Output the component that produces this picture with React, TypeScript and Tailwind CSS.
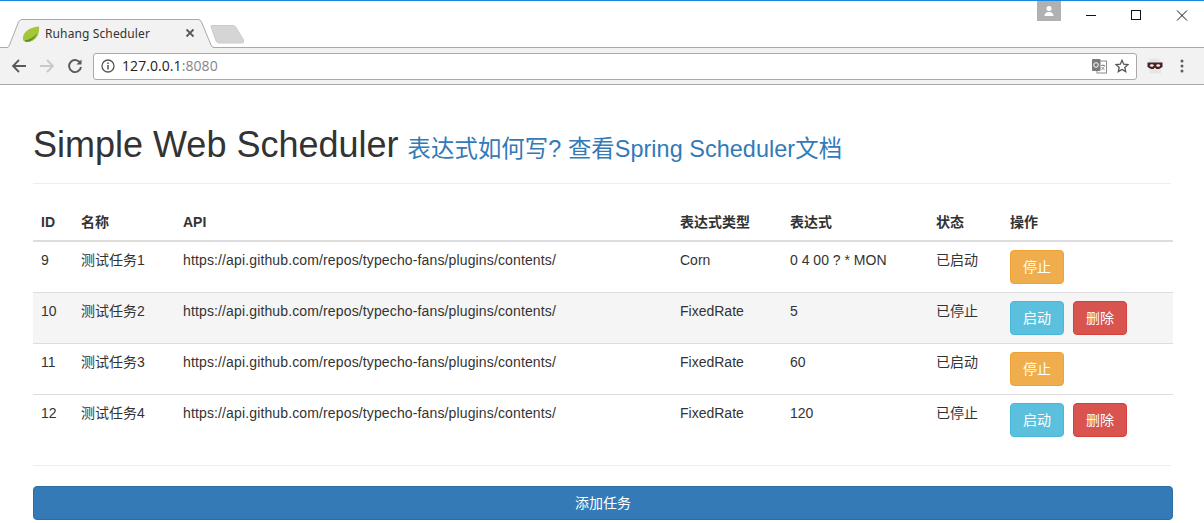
const rows = [
  { id: 9, name: "测试任务1", type: "Corn", expr: "0 4 00 ? * MON", status: "已启动", running: true },
  { id: 10, name: "测试任务2", type: "FixedRate", expr: "5", status: "已停止", running: false },
  { id: 11, name: "测试任务3", type: "FixedRate", expr: "60", status: "已启动", running: true },
  { id: 12, name: "测试任务4", type: "FixedRate", expr: "120", status: "已停止", running: false },
];
const url = "https://api.github.com/repos/typecho-fans/plugins/contents/";
const headers = ["ID", "名称", "API", "表达式类型", "表达式", "状态", "操作"];

function Tab() {
  return (
    <div className="relative z-10 -mt-[1px] h-[47px] w-[250px] shrink-0">
      <svg className="absolute left-0 top-0" width="250" height="50" viewBox="0 0 250 50" fill="none">
        <path d="M7 48.500V47.500Q8.500 47.500 9.500 45L18.500 22Q20 19.500 22 19.500H198Q200.500 19.500 201.500 22L211 45Q212 47.500 214 47.500V48.500Z" fill="#f2f2f2" />
        <path d="M6 47.500H7Q8.500 47.500 9.500 45L18.500 22Q20 19.500 22 19.500H198Q200.500 19.500 201.500 22L211 45Q212 47.500 214 47.500H215" stroke="#a9a9a9" />
        <path d="M211 26.500Q210.500 25.500 212 25.500H233Q235 25.500 236 27.500L243.500 40Q244.500 43 242 43H219Q217 43 216 41Z" fill="#d5d5d5" stroke="#cbcbcb" />
        <path d="M23 40C22 33 28 27.500 39 26.500C40 35 35 42 27.500 42C25.500 42 24 41.500 23 40Z" fill="#a4c737" />
        <path d="M24.500 40.500C29 40 34 37.500 37.500 33C35 39 30 42 26 42Z" fill="#5f8d27" />
        <path d="M186.500 29.500L193.500 36.500M193.500 29.500L186.500 36.500" stroke="#5a5a5a" strokeWidth="1.800" />
      </svg>
      <span className="absolute left-[45px] top-[25px] font-['Noto_Sans',sans-serif] text-[12px] leading-[17px] tracking-[0.12px] text-[#333]">
        Ruhang Scheduler
      </span>
    </div>
  );
}

function WindowControls() {
  return (
    <div className="ml-auto flex h-[46px] items-start">
      <div className="mr-[7px] flex h-[20px] w-[24px] items-center justify-center bg-[#b1b1b1]">
        <svg width="12" height="12" viewBox="0 0 12 12" fill="#fff">
          <circle cx="6" cy="3.500" r="2.500" />
          <path d="M1.500 11C1.500 8 4 7 6 7S10.500 8 10.500 11Z" />
        </svg>
      </div>
      <svg width="136" height="28" viewBox="0 0 136 28" fill="none" stroke="#111" strokeWidth="1">
        <path d="M18 14.500H28" />
        <rect x="63.500" y="9.500" width="9" height="9" />
        <path d="M109 9.500L119 19.500M119 9.500L109 19.500" />
      </svg>
    </div>
  );
}

function Toolbar() {
  return (
    <div className="flex h-[38px] items-center border-y border-t-[#a9a9a9] border-b-[#a8a8a8] bg-[#f2f2f2]">
      <svg className="ml-[11px] shrink-0" width="16" height="16" viewBox="0 0 16 16" fill="none" stroke="#5a5a5a" strokeWidth="1.800">
        <path d="M15 8H2M8 2L2 8L8 14" />
      </svg>
      <svg className="ml-[12px] shrink-0" width="16" height="16" viewBox="0 0 16 16" fill="none" stroke="#c8c8c8" strokeWidth="1.800">
        <path d="M1 8H14M8 2L14 8L8 14" />
      </svg>
      <svg className="ml-[12px] shrink-0" width="16" height="16" viewBox="0 0 16 16" fill="none" stroke="#5a5a5a" strokeWidth="1.900">
        <path d="M13.500 5.500A6 6 0 1 0 14 9" />
        <path d="M14.500 1.500V6.500H9.500" fill="#5a5a5a" stroke="none" />
      </svg>
      <div className="ml-[10px] flex h-[27px] w-[1044px] shrink-0 items-center rounded-[3px] border border-[#a9a9a9] bg-white">
        <svg className="ml-[7px] shrink-0" width="14" height="14" viewBox="0 0 14 14" fill="none" stroke="#555" strokeWidth="1.300">
          <circle cx="7" cy="7" r="6" />
          <path d="M7 6V10.500M7 3.500V5" strokeWidth="1.500" />
        </svg>
        <span className="ml-[7px] font-['Open_Sans',sans-serif] text-[14px] leading-[20px] tracking-[0.07px] text-[#222]">
          127.0.0.1<span className="text-[#80868b]">:8080</span>
        </span>
        <svg className="ml-auto shrink-0" width="15" height="15" viewBox="0 0 15 15">
          <rect x="5" y="2" width="9.500" height="12" fill="#fff" stroke="#8d8d8d" />
          <rect x="0" y="0" width="8.500" height="12" rx="1" fill="#7a7a7a" />
          <circle cx="4" cy="6" r="2.300" fill="none" stroke="#fff" />
          <path d="M9 6.500H13M11 5.500V7M9.500 11L12.500 7.500M9.500 8L12.500 11" stroke="#777" strokeWidth=".8" />
        </svg>
        <svg className="ml-[8px] mr-[7px] shrink-0" width="14" height="14" viewBox="0 0 14 14" fill="none" stroke="#555" strokeWidth="1.300">
          <path d="M7 1.300L8.700 5.200L13 5.600L9.800 8.400L10.700 12.600L7 10.400L3.300 12.600L4.200 8.400L1 5.600L5.300 5.200Z" />
        </svg>
      </div>
      <svg className="ml-[10px] shrink-0" width="16" height="16" viewBox="0 0 16 16">
        <path d="M2.500 0.500H11L14 3.500V15.500H2.500Z" fill="#e6e6e6" />
        <path d="M0.500 4.500H15.500V9L12 11H9.500L8 9.500L6.500 11H4L0.500 9Z" fill="#4b2020" />
        <ellipse cx="4.800" cy="7.500" rx="1.900" ry="1.200" fill="#eee" />
        <ellipse cx="11.200" cy="7.500" rx="1.900" ry="1.200" fill="#eee" />
      </svg>
      <svg className="ml-[17px] shrink-0" width="4" height="14" viewBox="0 0 4 14" fill="#5f5f5f">
        <circle cx="2" cy="2" r="1.500" />
        <circle cx="2" cy="7" r="1.500" />
        <circle cx="2" cy="12" r="1.500" />
      </svg>
    </div>
  );
}

function Btn({ label, cls }: { label: string; cls: string }) {
  return (
    <button className={`h-[34px] w-[54px] rounded-[4px] border text-[14px] leading-[20px] text-white ${cls}`}>
      {label}
    </button>
  );
}

export default function App() {
  return (
    <div className="h-[523px] w-[1204px] overflow-hidden bg-white font-['Liberation_Sans','Noto_Sans_CJK_SC',sans-serif] text-[14px] leading-[20px] text-[#333]">
      <div className="h-[1px] bg-[#1a87dc]" />
      <div className="flex h-[46px] items-start bg-white">
        <Tab />
        <WindowControls />
      </div>
      <Toolbar />
      <div className="px-[33px]">
        <div className="mt-[40px] border-b border-[#eeeeee] pb-[14px]">
          <h1 className="text-[36px] leading-[40px] font-normal">
            Simple Web Scheduler{" "}
            <a className="-ml-[1px] text-[23.400px] tracking-[0.06px] text-[#337ab7]">表达式如何写? 查看Spring Scheduler文档</a>
          </h1>
        </div>
        <table className="mt-[20px] w-[1140px] table-fixed border-collapse">
          <colgroup>
            <col className="w-[40px]" />
            <col className="w-[102px]" />
            <col className="w-[497px]" />
            <col className="w-[110px]" />
            <col className="w-[146px]" />
            <col className="w-[74px]" />
            <col className="w-[171px]" />
          </colgroup>
          <thead>
            <tr className="border-b-2 border-[#dddddd]">
              {headers.map((h) => (
                <th key={h} className="p-[8px] text-left font-bold">{h}</th>
              ))}
            </tr>
          </thead>
          <tbody>
            {rows.map((r, i) => (
              <tr key={r.id} className={`${i > 0 ? "border-t border-[#dddddd]" : ""} ${i === 1 ? "bg-[#f5f5f5]" : ""} h-[51px]`}>
                <td className="p-[8px] align-top">{r.id}</td>
                <td className="p-[8px] align-top">{r.name}</td>
                <td className="p-[8px] align-top tracking-[0.135px]">{url}</td>
                <td className="p-[8px] align-top">{r.type}</td>
                <td className="p-[8px] align-top">{r.expr}</td>
                <td className="p-[8px] align-top">{r.status}</td>
                <td className="p-[8px] align-top">
                  <div className="flex gap-[9px]">
                    {r.running ? (
                      <Btn label="停止" cls="border-[#eea236] bg-[#f0ad4e]" />
                    ) : (
                      <>
                        <Btn label="启动" cls="border-[#46b8da] bg-[#5bc0de]" />
                        <Btn label="删除" cls="border-[#d43f3a] bg-[#d9534f]" />
                      </>
                    )}
                  </div>
                </td>
              </tr>
            ))}
          </tbody>
        </table>
        <div className="mt-[19px] h-[1px] bg-[#eeeeee]" />
        <button className="mt-[20px] h-[34px] w-[1140px] rounded-[4px] border border-[#2e6da4] bg-[#337ab7] text-[14px] leading-[20px] text-white">
          添加任务
        </button>
      </div>
    </div>
  );
}
